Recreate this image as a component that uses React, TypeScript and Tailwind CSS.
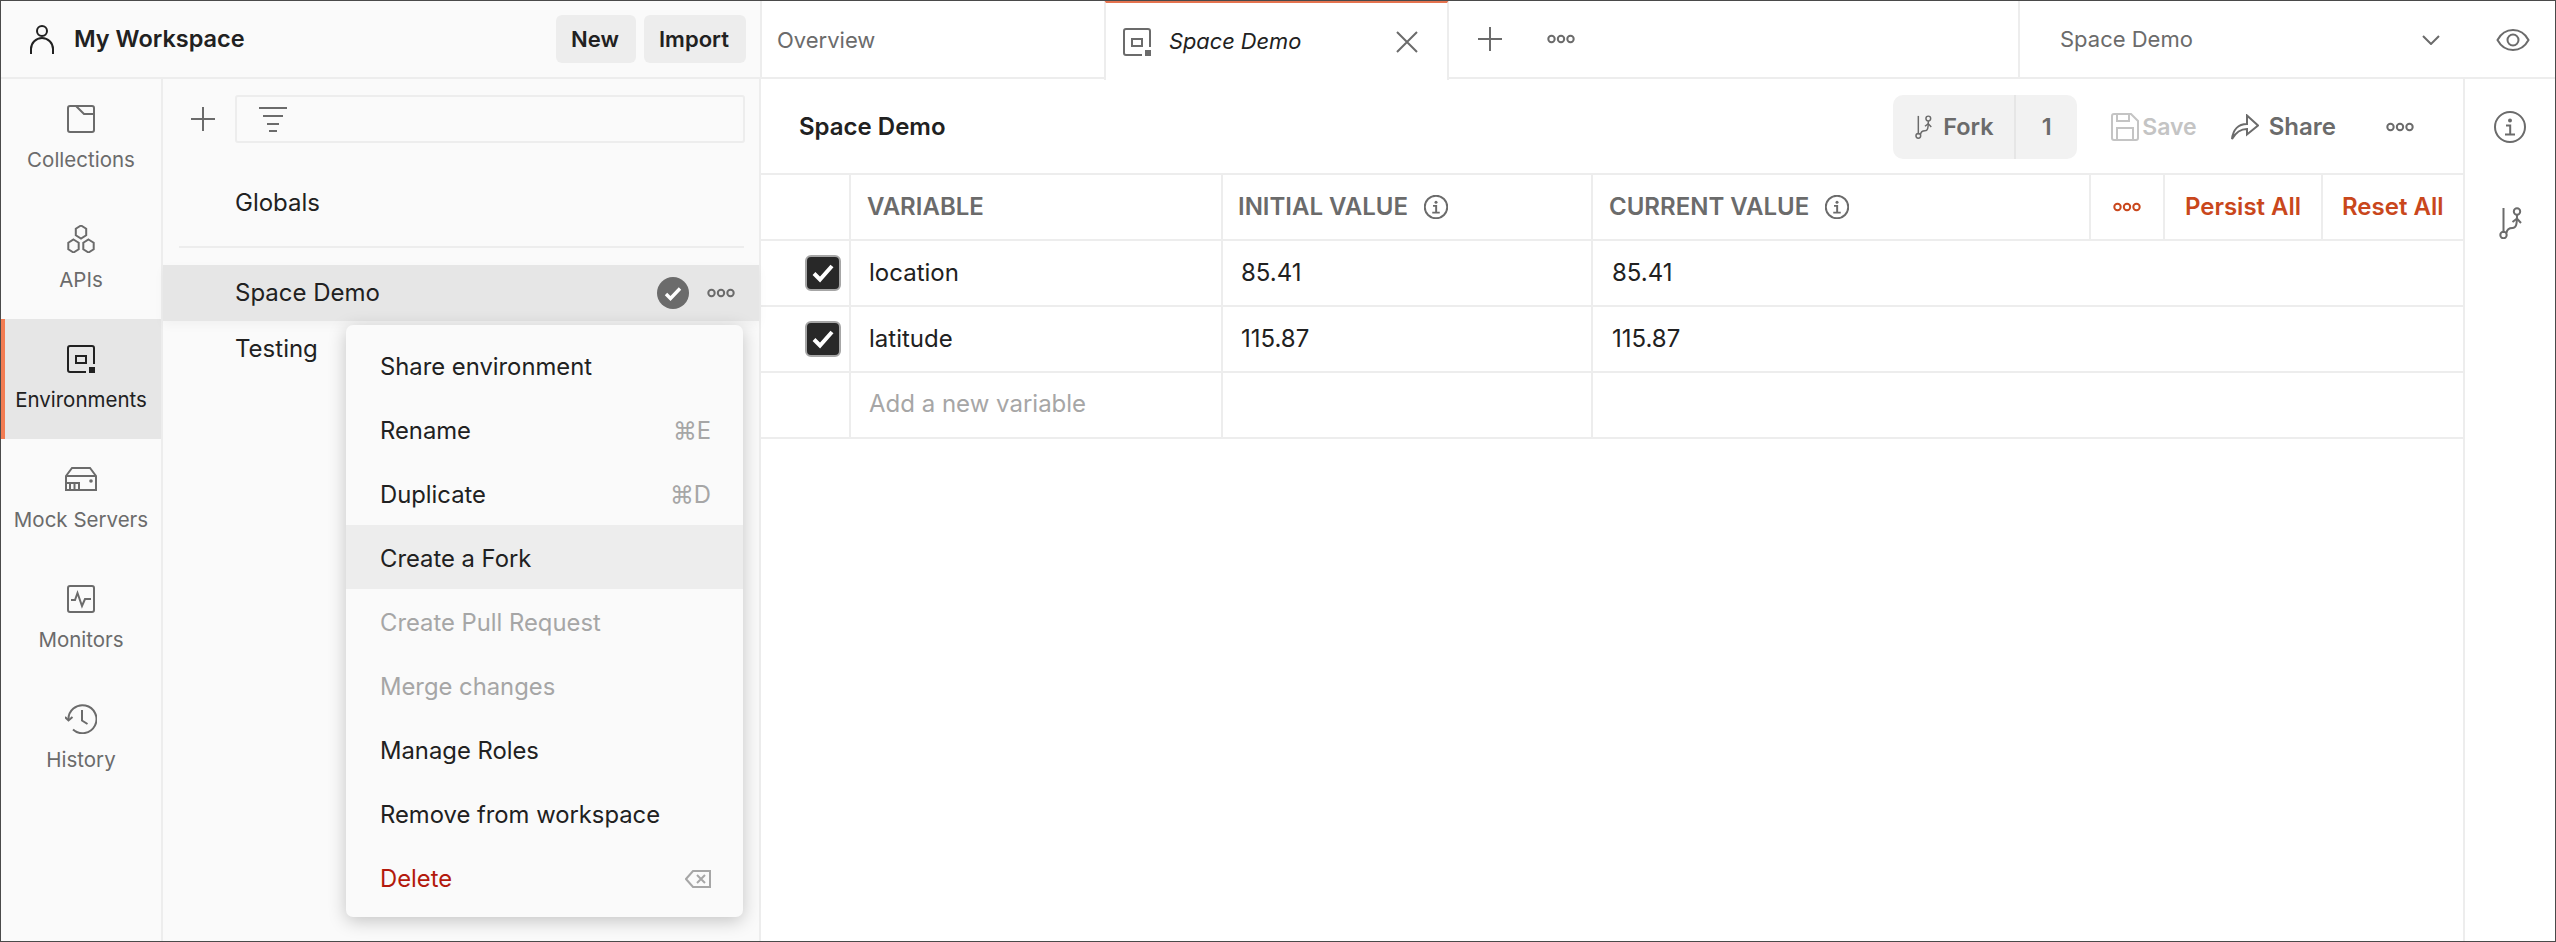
import React from "react";

const S = ({ w, h, vb, className = "", children }: { w: number; h: number; vb?: string; className?: string; children: React.ReactNode }) => (
  <svg width={w} height={h} viewBox={vb ?? `0 0 ${w} ${h}`} fill="none" stroke="currentColor" strokeWidth={2} className={`shrink-0 ${className}`}>
    {children}
  </svg>
);

const Dots = ({ className = "" }: { className?: string }) => (
  <S w={28} h={10} className={className}>
    <circle cx="4.5" cy="5" r="3.2" />
    <circle cx="14" cy="5" r="3.2" />
    <circle cx="23.5" cy="5" r="3.2" />
  </S>
);

const EnvIcon = ({ className = "" }: { className?: string }) => (
  <S w={28} h={28} className={className}>
    <path d="M27 19V3a2 2 0 0 0-2-2H3a2 2 0 0 0-2 2v22a2 2 0 0 0 2 2h16" />
    <rect x="9" y="11" width="10" height="7" />
    <rect x="22" y="22" width="6" height="6" fill="currentColor" stroke="none" />
  </S>
);

const Hex = ({ cx, cy }: { cx: number; cy: number }) => (
  <path d={`M${cx} ${cy - 6.5}l5.2 3.2v6.6l-5.2 3.2-5.2-3.2v-6.6z`} />
);

const InfoIcon = ({ size }: { size: number }) => (
  <S w={size} h={size} vb="0 0 32 32">
    <circle cx="16" cy="16" r="15" strokeWidth={size < 30 ? 2.6 : 2} />
    <circle cx="16" cy="9.5" r="2" fill="currentColor" stroke="none" />
    <path d="M12 14.5h4.2v8.5M11 23.5h10" strokeWidth={size < 30 ? 2.6 : 2} />
  </S>
);

const ForkIcon = ({ w, h }: { w: number; h: number }) => (
  <S w={w} h={h} vb="0 0 23 32">
    <path d="M4.5 1v25" />
    <circle cx="4.5" cy="28" r="3.2" />
    <circle cx="18" cy="4.5" r="3.2" />
    <path d="M7.5 26c.5-4 3-5 6-5 3.5 0 4.5-3 4.5-13" />
    <path d="M13.5 15l4.5-3.5 4 4.5" />
  </S>
);

const NavItem = ({ label, active, children }: { label: string; active?: boolean; children: React.ReactNode }) => (
  <div className={`relative h-[120px] pt-[26px] flex flex-col items-center ${active ? "bg-[#e6e6e6] text-[#212121]" : "text-[#6b6b6b]"}`}>
    {active && <div className="absolute left-0 top-0 bottom-0 w-[4px] bg-[#f27c52]" />}
    <div className="h-[28px] flex items-center justify-center">{children}</div>
    <div className="mt-[15px] text-[20.5px] leading-[24px] whitespace-nowrap">{label}</div>
  </div>
);

const MenuItem = ({ label, color = "text-[#212121]", bg = "", right }: { label: string; color?: string; bg?: string; right?: React.ReactNode }) => (
  <div className={`h-[64px] pl-[34px] pr-[32px] pt-[3px] flex items-center justify-between text-[23.8px] ${color} ${bg}`}>
    <span>{label}</span>
    {right && <span className="text-[#a6a6a6] flex items-center">{right}</span>}
  </div>
);

const Row = ({ children, v1, v2, ph }: { children?: React.ReactNode; v1: string; v2?: string; ph?: boolean }) => (
  <div className="h-[66px] flex border-b-2 border-[#ededed] text-[24px] text-[#212121]">
    <div className="w-[90px] pl-[44px] border-r-2 border-[#ededed] flex items-center">{children}</div>
    <div className={`w-[372px] pl-[18px] border-r-2 border-[#ededed] flex items-center ${ph ? "text-[#a6a6a6] pb-[2px]" : ""}`}>{v1}</div>
    <div className="w-[370px] pl-[18px] border-r-2 border-[#ededed] flex items-center">{v2}</div>
    <div className="flex-1 pl-[19px] flex items-center">{v2}</div>
  </div>
);

const Check = () => (
  <div className="w-[36px] h-[36px] rounded-[6px] bg-[#282828] border-2 border-[#a6a6a6] flex items-center justify-center text-white">
    <S w={24} h={20}>
      <path d="M3 10.5l6 6L21 3" strokeWidth={4} />
    </S>
  </div>
);

export default function App() {
  return (
    <div className="w-[2556px] h-[942px] overflow-hidden flex flex-col border border-[#4a4a4a] bg-white font-[Inter,sans-serif] text-[24px] text-[#212121]">
      {/* top bar */}
      <div className="h-[78px] flex shrink-0">
        <div className="w-[761px] bg-[#fafafa] border-b-2 border-r-2 border-[#ededed] flex items-center pl-[28px] pr-[14px]">
          <S w={26} h={30} className="text-[#212121]">
            <circle cx="13" cy="7" r="5" />
            <path d="M2 30v-5a11 11 0 0 1 22 0v5" />
          </S>
          <div className="ml-[19px] text-[23.5px] font-semibold flex-1">My Workspace</div>
          <div className="h-[48px] w-[80px] pr-[2px] rounded-[6px] bg-[#ededed] flex items-center justify-center font-semibold text-[22px]">New</div>
          <div className="ml-[8px] h-[48px] w-[102px] pr-[2px] rounded-[6px] bg-[#ededed] flex items-center justify-center font-semibold text-[22px]">Import</div>
        </div>
        <div className="w-[342px] border-b-2 border-[#ededed] pl-[15px] pt-[2px] flex items-center text-[#6b6b6b] text-[22px]">Overview</div>
        <div className="w-[345px] border-x-2 border-[#ededed] border-t-[3px] border-t-[#e5734f] -mt-[1px] h-[80px] bg-white flex items-center pl-[17px] pr-[28px]">
          <EnvIcon className="text-[#6b6b6b]" />
          <div className="ml-[18px] flex-1 italic text-[21.8px]">Space Demo</div>
          <S w={24} h={24} className="text-[#6b6b6b]">
            <path d="M2 2l20 20M22 2L2 22" />
          </S>
        </div>
        <div className="flex-1 flex border-b-2 border-[#ededed] text-[#6b6b6b]">
          <div className="w-[571px] flex items-center pl-[28px] border-r-2 border-[#ededed]">
            <S w={26} h={26}>
              <path d="M13 1v24M1 13h24" />
            </S>
            <Dots className="ml-[44px]" />
          </div>
          <div className="flex-1 flex items-center pl-[40px] pr-[25px] pt-[1px] text-[22px]">
            <div className="flex-1">Space Demo</div>
            <S w={18} h={10}>
              <path d="M1 1l8 8 8-8" />
            </S>
            <S w={34} h={24} className="ml-[56px]">
              <path d="M1.5 12C5 5.5 11 2 17 2s12 3.5 15.5 10C29 18.5 23 22 17 22S5 18.5 1.5 12z" />
              <circle cx="17" cy="12" r="5.5" />
            </S>
          </div>
        </div>
      </div>

      {/* body */}
      <div className="flex-1 flex min-h-0">
        {/* nav */}
        <div className="w-[162px] bg-[#fafafa] border-r-2 border-[#ededed] shrink-0">
          <NavItem label="Collections">
            <S w={28} h={28}>
              <rect x="1" y="1" width="26" height="26" rx="2" />
              <path d="M9 1l8 8h10" />
            </S>
          </NavItem>
          <NavItem label="APIs">
            <S w={28} h={28}>
              <Hex cx={14} cy={7} />
              <Hex cx={6.5} cy={21} />
              <Hex cx={21.5} cy={21} />
            </S>
          </NavItem>
          <NavItem label="Environments" active>
            <EnvIcon />
          </NavItem>
          <NavItem label="Mock Servers">
            <S w={32} h={24}>
              <path d="M7 1h18l6 8v14H1V9z" />
              <path d="M1 9h30M1 16h14M5 16v7M9.5 16v7M14 16v7" />
              <circle cx="26" cy="14" r="1.8" fill="currentColor" stroke="none" />
            </S>
          </NavItem>
          <NavItem label="Monitors">
            <S w={28} h={28}>
              <rect x="1" y="1" width="26" height="26" rx="2" />
              <path d="M4 15h4l2.5-7 4.5 13 3-7h6" />
            </S>
          </NavItem>
          <NavItem label="History">
            <S w={32} h={30}>
              <path d="M3.5 16A14 14 0 1 1 8 25.5" />
              <path d="M0 13l3.5 3.5L7.5 13" />
              <path d="M17 6v10.5l5.5 3.5" />
            </S>
          </NavItem>
        </div>

        {/* sidebar */}
        <div className="w-[598px] shrink-0 bg-[#fafafa] border-r-2 border-[#ededed] relative flex flex-col">
          <div className="flex items-center pt-[16px] pl-[27px] pr-[14px] text-[#6b6b6b]">
            <S w={26} h={26}>
              <path d="M13 1v24M1 13h24" />
            </S>
            <div className="ml-[19px] flex-1 h-[48px] border-2 border-[#ededed] rounded-[3px] flex items-center pl-[21px]">
              <S w={30} h={26}>
                <path d="M1 2h28M5 10h20M9 18h12M11 25h8" />
              </S>
            </div>
          </div>
          <div className="mt-[32px] h-[56px] pl-[72px] flex items-center">Globals</div>
          <div className="mt-[15px] h-[2px] ml-[16px] mr-[15px] bg-[#ededed]" />
          <div className="mt-[17px] h-[56px] pl-[72px] pr-[24px] flex items-center bg-[#e6e6e6] shadow-[0_4px_10px_rgba(0,0,0,0.04)]">
            <div className="flex-1">Space Demo</div>
            <div className="w-[32px] h-[32px] rounded-full bg-[#6b6b6b] flex items-center justify-center text-white">
              <S w={18} h={15}>
                <path d="M2 8l4.5 4.5L16 2.5" strokeWidth={3.4} />
              </S>
            </div>
            <Dots className="ml-[18px] text-[#6b6b6b]" />
          </div>
          <div className="h-[56px] pl-[72px] flex items-center">Testing</div>

          <div className="absolute left-[183px] top-[246px] w-[397px] py-[8px] rounded-[7px] bg-[#fafafa] shadow-[0_4px_18px_rgba(0,0,0,0.22)]">
            <MenuItem label="Share environment" />
            <MenuItem label="Rename" right="⌘E" />
            <MenuItem label="Duplicate" right="⌘D" />
            <MenuItem label="Create a Fork" bg="bg-[#ededed]" />
            <MenuItem label="Create Pull Request" color="text-[#a6a6a6]" />
            <MenuItem label="Merge changes" color="text-[#a6a6a6]" />
            <MenuItem label="Manage Roles" />
            <MenuItem label="Remove from workspace" />
            <MenuItem
              label="Delete"
              color="text-[#b3190c]"
              right={
                <S w={26} h={18}>
                  <path d="M25 1H8L1 9l7 8h17z" />
                  <path d="M12 5l8 8M20 5l-8 8" />
                </S>
              }
            />
          </div>
        </div>

        {/* content */}
        <div className="w-[1702px] shrink-0 flex flex-col">
          <div className="h-[96px] pt-[2px] border-b-2 border-[#ededed] flex items-center pl-[38px] pr-[49px]">
            <div className="flex-1 font-semibold text-[24px]">Space Demo</div>
            <div className="h-[64px] w-[184px] rounded-[10px] bg-[#f2f2f2] flex text-[#6b6b6b] font-semibold text-[23.5px]">
              <div className="w-[123px] border-r-2 border-[#e6e6e6] flex items-center pl-[22px]">
                <ForkIcon w={17} h={24} />
                <span className="ml-[11px]">Fork</span>
              </div>
              <div className="flex-1 flex items-center justify-center">1</div>
            </div>
            <div className="ml-[34px] flex items-center text-[#c4c4c4] font-semibold text-[23px]">
              <S w={28} h={28}>
                <path d="M1 3a2 2 0 0 1 2-2h17l7 7v17a2 2 0 0 1-2 2H3a2 2 0 0 1-2-2z" />
                <path d="M6 1v7h12V1M6 27V15h16v12" />
              </S>
              <span className="ml-[3px]">Save</span>
            </div>
            <div className="ml-[34px] flex items-center text-[#6b6b6b] font-semibold text-[24px]">
              <S w={28} h={26}>
                <path d="M16 1.5l11 10-11 9v-5.5c-7 0-11 3-15 10 1-9 6-15 15-15z" />
              </S>
              <span className="ml-[10px]">Share</span>
            </div>
            <Dots className="ml-[50px] text-[#6b6b6b]" />
          </div>

          {/* header row */}
          <div className="h-[66px] flex border-b-2 border-[#ededed] text-[24px] font-semibold text-[#6b6b6b]">
            <div className="w-[90px] border-r-2 border-[#ededed]" />
            <div className="w-[372px] pl-[16px] border-r-2 border-[#ededed] flex items-center">VARIABLE</div>
            <div className="w-[370px] pl-[15px] border-r-2 border-[#ededed] flex items-center">
              INITIAL VALUE
              <span className="ml-[16px] flex"><InfoIcon size={24} /></span>
            </div>
            <div className="w-[498px] pl-[16px] border-r-2 border-[#ededed] flex items-center">
              CURRENT VALUE
              <span className="ml-[16px] flex"><InfoIcon size={24} /></span>
            </div>
            <div className="w-[74px] border-r-2 border-[#ededed] flex items-center justify-center text-[#c9471c]">
              <Dots />
            </div>
            <div className="w-[158px] border-r-2 border-[#ededed] flex items-center justify-center text-[#c9471c]">Persist All</div>
            <div className="flex-1 pl-[19px] flex items-center text-[#c9471c]">Reset All</div>
          </div>
          <Row v1="location" v2="85.41"><Check /></Row>
          <Row v1="latitude" v2="115.87"><Check /></Row>
          <Row v1="Add a new variable" ph />
        </div>

        {/* right rail */}
        <div className="flex-1 border-l-2 border-[#ededed] flex flex-col items-center text-[#6b6b6b]">
          <div className="mt-[32px] flex"><InfoIcon size={32} /></div>
          <div className="mt-[64px] flex"><ForkIcon w={23} h={32} /></div>
        </div>
      </div>
    </div>
  );
}
